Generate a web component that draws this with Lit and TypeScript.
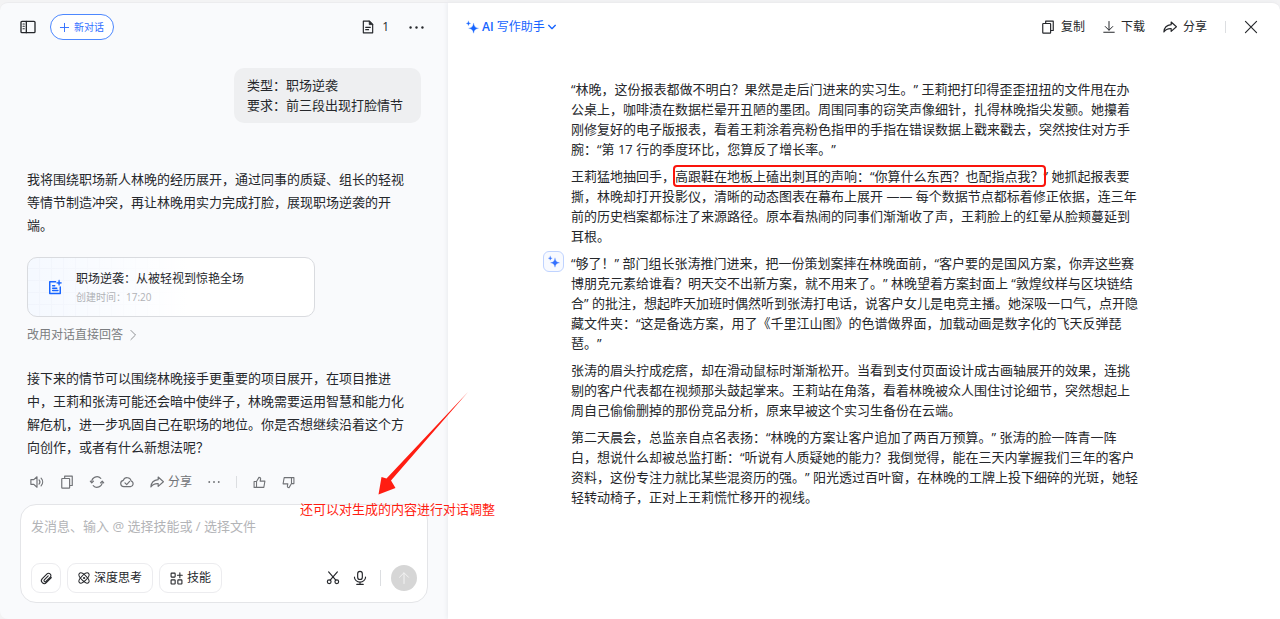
import { LitElement, html, css, svg, nothing } from "lit";
import { customElement, property } from "lit/decorators.js";

const spark = svg`<path d="M14 4.500c1.300 6 3.200 7.900 9 9c-5.800 1.100-7.700 3-9 9c-1.300-6-3.200-7.900-9-9c5.800-1.100 7.700-3 9-9z" fill="currentColor"/><path d="M4.500 0.500c.6 2.800 1.300 3.500 4 4c-2.700.5-3.400 1.200-4 4c-.6-2.800-1.300-3.500-4-4c2.700-.5 3.400-1.200 4-4z" fill="currentColor"/>`;

const icons: Record<string, unknown> = {
  sidebar: svg`<rect x="1.500" y="3.500" width="21" height="17" rx="1.500"/><path d="M9.500 3.500v17"/><path d="M4.500 7.500h2M4.500 11h2M4.500 14.500h2" stroke-width="1.600"/>`,
  plus: svg`<path d="M12 1v22M1 12h22"/>`,
  file: svg`<path d="M14.500 2H4v20h16V7.500z"/><path d="M14 2v6h6z" fill="currentColor" stroke-width="1"/><path d="M8 12.500h8M8 16.500h5"/>`,
  more: svg`<g fill="currentColor" stroke="none"><circle cx="2.500" cy="12" r="1.900"/><circle cx="12" cy="12" r="1.900"/><circle cx="21.500" cy="12" r="1.900"/></g>`,
  spark,
  down: svg`<path d="M2 7l10 10L22 7"/>`,
  right: svg`<path d="M7 1l11 11L7 23"/>`,
  copy: svg`<path d="M8 5.500V2h13v16h-4"/><rect x="3" y="6" width="13.500" height="16.500" rx="1"/>`,
  download: svg`<path d="M12 1v17M4.500 11l7.500 7.500 7.500-7.500M1.500 22.500h21"/>`,
  share: svg`<path d="M14 3.500l9 8-9 8v-4.800C8.500 14.300 4.500 16 1.500 20.500C2 13.500 6 8.700 14 8z"/>`,
  close: svg`<path d="M2.500 2.500l19 19M21.500 2.500l-19 19"/>`,
  doc: svg`<path d="M13 3H3v20h18V12"/><path d="M8 10h3.500M8 14h7M8 18h9"/><path d="M19 0.500c.6 3.200 1.300 3.900 4.500 4.500c-3.200.6-3.900 1.300-4.500 4.500c-.6-3.200-1.300-3.900-4.500-4.500c3.200-.6 3.900-1.300 4.500-4.500z" fill="currentColor" stroke-width="1"/>`,
  sound: svg`<path d="M12 3L6.500 8H1.500v8h5l5.500 5z"/><path d="M15.500 8.500c1.800 2 1.800 5 0 7M19 5.500c3.600 3.800 3.600 9.200 0 13"/>`,
  refresh: svg`<path d="M3 12a9 9 0 0 1 15.500-6.200M21 12a9 9 0 0 1-15.500 6.200"/><path d="M0.500 10.500L3 13.500l3-3M23.500 13.500L21 10.500l-3 3"/>`,
  cloud: svg`<path d="M6.500 20a5.500 5.500 0 0 1-.8-10.900a7 7 0 0 1 13.400 1.200A5 5 0 0 1 18 20z"/><path d="M8.500 13.500l3 3 5-5.500"/>`,
  like: svg`<path d="M2 10h4.500v11H2zM6.500 10L11 2.500c2.500 0 3.500 1.500 3 3.500l-.8 3.500H22L20 21H6.500"/>`,
  dislike: svg`<path d="M22 14h-4.500V3H22zM17.500 14L13 21.500c-2.500 0-3.500-1.500-3-3.500l.8-3.500H2L4 3h13.500"/>`,
  clip: svg`<path d="M21 10.500l-9.300 9.300a5.300 5.300 0 0 1-7.500-7.500l8.800-8.800a3.800 3.800 0 0 1 5.400 0l.6.600a3.800 3.800 0 0 1 0 5.400l-8 8a2.200 2.200 0 0 1-3.100-3.100l7.300-7.300"/>`,
  atom: svg`<ellipse cx="12" cy="12" rx="13" ry="5.500" transform="rotate(45 12 12)"/><ellipse cx="12" cy="12" rx="13" ry="5.500" transform="rotate(-45 12 12)"/><circle cx="12" cy="12" r="1.200" fill="currentColor"/>`,
  skill: svg`<rect x="2" y="2" width="7.500" height="7.500" rx="1"/><rect x="2" y="14.500" width="7.500" height="7.500" rx="1"/><rect x="14.500" y="14.500" width="7.500" height="7.500" rx="1"/><path d="M18.200 1.500v9M13.700 6h9"/>`,
  cut: svg`<circle cx="5.500" cy="18.500" r="3.200"/><circle cx="18.500" cy="18.500" r="3.200"/><path d="M4.500 1.500l12.300 14.300M19.500 1.500L7.200 15.800"/>`,
  mic: svg`<rect x="8" y="0.500" width="8" height="14" rx="4"/><path d="M2.500 10.500a9.500 8.500 0 0 0 19 0M12 19v4M6.500 23h11"/>`,
  up: svg`<path d="M12 23V2M3 10.500L12 1.500l9 9"/>`,
};

@customElement("ui-icon")
class UiIcon extends LitElement {
  @property() name = "";
  @property({ type: Number }) size = 14;
  @property({ type: Number }) weight = 2;

  static styles = css`
    :host { display: inline-flex; flex: none; }
    svg { display: block; overflow: visible; }
  `;

  render() {
    return html`<svg width=${this.size} height=${this.size} viewBox="0 0 24 24" fill="none"
      stroke="currentColor" stroke-width=${this.weight} stroke-linejoin="round" stroke-linecap="round"
      aria-hidden="true">${icons[this.name] ?? nothing}</svg>`;
  }
}

const story = [
  html`“林晚，这份报表都做不明白？果然是走后门进来的实习生。” 王莉把打印得歪歪扭扭的文件甩在办公桌上，咖啡渍在数据栏晕开丑陋的墨团。周围同事的窃笑声像细针，扎得林晚指尖发颤。她攥着刚修复好的电子版报表，看着王莉涂着亮粉色指甲的手指在错误数据上戳来戳去，突然按住对方手腕：“第 17 行的季度环比，您算反了增长率。”`,
  html`王莉猛地抽回手，<mark>高跟鞋在地板上磕出刺耳的声响：“你算什么东西？也配指点我？</mark>” 她抓起报表要撕，林晚却打开投影仪，清晰的动态图表在幕布上展开 —— 每个数据节点都标着修正依据，连三年前的历史档案都标注了来源路径。原本看热闹的同事们渐渐收了声，王莉脸上的红晕从脸颊蔓延到耳根。`,
  html`“够了！” 部门组长张涛推门进来，把一份策划案摔在林晚面前，“客户要的是国风方案，你弄这些赛博朋克元素给谁看？明天交不出新方案，就不用来了。” 林晚望着方案封面上 “敦煌纹样与区块链结合” 的批注，想起昨天加班时偶然听到张涛打电话，说客户女儿是电竞主播。她深吸一口气，点开隐藏文件夹：“这是备选方案，用了《千里江山图》的色谱做界面，加载动画是数字化的飞天反弹琵琶。”`,
  html`张涛的眉头拧成疙瘩，却在滑动鼠标时渐渐松开。当看到支付页面设计成古画轴展开的效果，连挑剔的客户代表都在视频那头鼓起掌来。王莉站在角落，看着林晚被众人围住讨论细节，突然想起上周自己偷偷删掉的那份竞品分析，原来早被这个实习生备份在云端。`,
  html`第二天晨会，总监亲自点名表扬：“林晚的方案让客户追加了两百万预算。” 张涛的脸一阵青一阵白，想说什么却被总监打断：“听说有人质疑她的能力？我倒觉得，能在三天内掌握我们三年的客户资料，这份专注力就比某些混资历的强。” 阳光透过百叶窗，在林晚的工牌上投下细碎的光斑，她轻轻转动椅子，正对上王莉慌忙移开的视线。`,
];

@customElement("app-root")
class AppRoot extends LitElement {
  static styles = css`
    :host {
      display: block;
      background: #f3f3f4;
      color: #25272b;
      font-family: "Open Sans", "Noto Sans CJK SC", sans-serif;
      font-size: 13px;
      line-height: 20px;
      text-spacing-trim: space-all;
    }
    * { box-sizing: border-box; }
    p { margin: 0; }
    button, textarea { font: inherit; color: inherit; border: 0; background: none; padding: 0; margin: 0; }
    button { display: inline-flex; align-items: center; cursor: pointer; white-space: nowrap; }
    .shell { display: flex; min-height: 100vh; padding-top: 2px; }
    .chat {
      position: relative;
      flex: 0 0 35%;
      min-width: 0;
      display: flex;
      flex-direction: column;
      padding: 0 20px 16px;
      background: #f9fafc;
      border-top: 1px solid #ececee;
      border-radius: 8px 0 0 8px;
    }
    .doc {
      flex: 1;
      min-width: 0;
      background: #fff;
      border-top: 1px solid #ececee;
      border-radius: 0 8px 0 0;
      box-shadow: -1px 0 4px #e9ebef;
      z-index: 0;
    }
    .bar { display: flex; align-items: center; height: 48px; }
    .chat .bar { gap: 14px; }
    .spacer { flex: 1; }
    .new {
      height: 26px;
      padding: 0 9px;
      gap: 5px;
      border: 1px solid #4d88ff;
      border-radius: 13px;
      background: #fff;
      color: #2f6eff;
      font-size: 10px;
    }
    .count { gap: 7px; font-size: 12px; }
    .chat .bar .count { margin-right: 6px; }
    .chat .bar .menu { margin-right: 4px; }
    .talk { flex: 1; display: flex; flex-direction: column; align-items: flex-start; padding: 0 7px; }
    .bubble {
      align-self: flex-end;
      min-width: 187px;
      margin-top: 17px;
      padding: 7px 13px 8px;
      border-radius: 10px;
      background: #eeeff1;
    }
    .reply { line-height: 23px; width: 100%; padding-right: 10px; }
    .first { margin-top: 45px; }
    .second { margin-top: 22px; }
    .card {
      display: flex;
      align-items: center;
      gap: 14px;
      width: 288px;
      max-width: 100%;
      height: 60px;
      margin-top: 20px;
      padding: 0 20px;
      border: 1px solid #d9dbdf;
      border-radius: 10px;
      color: inherit;
      text-decoration: none;
      background:
        linear-gradient(90deg, #ffffff00 0, #fff 160px),
        repeating-linear-gradient(90deg, #ffffff00 0 11px, #f0f4fc 11px 12px),
        repeating-linear-gradient(0deg, #f5f9ff 0 11px, #f0f4fc 11px 12px);
    }
    .card ui-icon { color: #1664ff; }
    .title { display: block; font-size: 12px; line-height: 20px; }
    .time { display: block; font-size: 10px; line-height: 16px; color: #b0b2b6; }
    .alt { display: inline-flex; align-items: center; gap: 5px; margin-top: 8px; color: #7b7d80; font-size: 12px; text-decoration: none; }
    .tools { display: flex; align-items: center; gap: 16px; height: 20px; margin-top: 13px; padding-left: 3px; color: #707276; font-size: 12px; }
    .tools .share { gap: 4px; }
    .sep { width: 1px; height: 12px; background: #dcdee1; }
    .composer {
      display: flex;
      flex-direction: column;
      height: 99px;
      padding: 11px 10px 9px;
      border: 1px solid #e4e5e8;
      border-radius: 16px;
      background: #fff;
    }
    .composer textarea { flex: 1; width: 100%; resize: none; outline: 0; line-height: 20px; }
    .composer textarea::placeholder { color: #b3b4b7; opacity: 1; }
    .row { display: flex; align-items: center; gap: 6px; }
    .chip { height: 30px; padding: 0 10px; gap: 4px; border: 1px solid #ececef; border-radius: 9px; font-size: 12px; }
    .chip.square { width: 30px; padding: 0; justify-content: center; }
    .tail { display: flex; align-items: center; gap: 13px; }
    .tail .sep { height: 16px; }
    .send { width: 26px; height: 26px; justify-content: center; border-radius: 50%; background: #d6d6d6; color: #f3f3f3; margin-left: -3px; }
    .note { position: absolute; z-index: 2; left: 300px; bottom: 100px; color: #ff1d12; white-space: nowrap; }
    .arrow { position: absolute; z-index: 2; left: 376px; bottom: 122px; }
    .doc .bar { padding: 0 22px 0 18px; gap: 18px; font-size: 12px; }
    .doc .bar button { gap: 6px; }
    .doc .bar .assistant { gap: 3px; color: #1664ff; }
    .assistant b { font-weight: 600; }
    .story {
      display: flex;
      flex-direction: column;
      gap: 7px;
      max-width: 634px;
      margin: 0 auto;
      padding: 28px 42px 24px 24px;
    }
    .story p { position: relative; }
    .badge {
      position: absolute;
      left: -28px;
      top: -2px;
      width: 21px;
      height: 21px;
      justify-content: center;
      border: 1px solid #bfd3ff;
      border-radius: 6px;
      background: #f8faff;
      color: #3370ff;
    }
    mark { color: inherit; background: none; outline: 2px solid #fa140c; outline-offset: 0; border-radius: 2px; }
  `;

  render() {
    return html`
      <div class="shell">
        <section class="chat">
          <header class="bar">
            <button aria-label="侧边栏"><ui-icon name="sidebar" size="16"></ui-icon></button>
            <button class="new"><ui-icon name="plus" size="9" weight="2.500"></ui-icon>新对话</button>
            <span class="spacer"></span>
            <button class="count"><ui-icon name="file" size="14"></ui-icon>1</button>
            <button class="menu" aria-label="更多"><ui-icon name="more" size="15"></ui-icon></button>
          </header>
          <div class="talk">
            <div class="bubble"><p>类型：职场逆袭</p><p>要求：前三段出现打脸情节</p></div>
            <p class="reply first">我将围绕职场新人林晚的经历展开，通过同事的质疑、组长的轻视等情节制造冲突，再让林晚用实力完成打脸，展现职场逆袭的开端。</p>
            <a class="card" href="#doc">
              <ui-icon name="doc" size="14" weight="2.500"></ui-icon>
              <span><span class="title">职场逆袭：从被轻视到惊艳全场</span><span class="time">创建时间：17:20</span></span>
            </a>
            <a class="alt" href="#chat">改用对话直接回答<ui-icon name="right" size="10"></ui-icon></a>
            <p class="reply second">接下来的情节可以围绕林晚接手更重要的项目展开，在项目推进中，王莉和张涛可能还会暗中使绊子，林晚需要运用智慧和能力化解危机，进一步巩固自己在职场的地位。你是否想继续沿着这个方向创作，或者有什么新想法呢？</p>
            <div class="tools">
              <button aria-label="朗读"><ui-icon name="sound" size="14"></ui-icon></button>
              <button aria-label="复制"><ui-icon name="copy" size="14"></ui-icon></button>
              <button aria-label="重新生成"><ui-icon name="refresh" size="14"></ui-icon></button>
              <button aria-label="收藏"><ui-icon name="cloud" size="14"></ui-icon></button>
              <button class="share"><ui-icon name="share" size="14"></ui-icon>分享</button>
              <button aria-label="更多"><ui-icon name="more" size="12"></ui-icon></button>
              <span class="sep"></span>
              <button aria-label="喜欢"><ui-icon name="like" size="13"></ui-icon></button>
              <button aria-label="不喜欢"><ui-icon name="dislike" size="13"></ui-icon></button>
            </div>
          </div>
          <div class="composer">
            <textarea aria-label="消息" placeholder="发消息、输入 @ 选择技能或 / 选择文件"></textarea>
            <div class="row">
              <button class="chip square" aria-label="附件"><ui-icon name="clip" size="13"></ui-icon></button>
              <button class="chip"><ui-icon name="atom" size="12"></ui-icon>深度思考</button>
              <button class="chip"><ui-icon name="skill" size="13"></ui-icon>技能</button>
              <span class="spacer"></span>
              <div class="tail">
                <button aria-label="截图"><ui-icon name="cut" size="14"></ui-icon></button>
                <button aria-label="语音"><ui-icon name="mic" size="14"></ui-icon></button>
                <span class="sep"></span>
                <button class="send" aria-label="发送"><ui-icon name="up" size="12"></ui-icon></button>
              </div>
            </div>
          </div>
          <svg class="arrow" width="94" height="106" viewBox="0 0 94 106" aria-hidden="true">
            <path d="M92 1L15 89.500L19.500 97L2.500 103.500L5.500 86L10.500 87.500Z" fill="#ff1d12"/>
          </svg>
          <span class="note">还可以对生成的内容进行对话调整</span>
        </section>
        <main class="doc">
          <header class="bar">
            <button class="assistant"><ui-icon name="spark" size="13" weight="0.500"></ui-icon><span><b>AI</b> 写作助手</span><ui-icon name="down" size="8" weight="4"></ui-icon></button>
            <span class="spacer"></span>
            <button><ui-icon name="copy" size="14"></ui-icon>复制</button>
            <button><ui-icon name="download" size="12"></ui-icon>下载</button>
            <button><ui-icon name="share" size="14"></ui-icon>分享</button>
            <span class="sep"></span>
            <button aria-label="关闭"><ui-icon name="close" size="14"></ui-icon></button>
          </header>
          <article class="story">
            ${story.map((text, i) => html`<p>${i === 2 ? html`<button class="badge" aria-label="AI 润色"><ui-icon name="spark" size="12" weight="0.500"></ui-icon></button>` : nothing}${text}</p>`)}
          </article>
        </main>
      </div>`;
  }
}
